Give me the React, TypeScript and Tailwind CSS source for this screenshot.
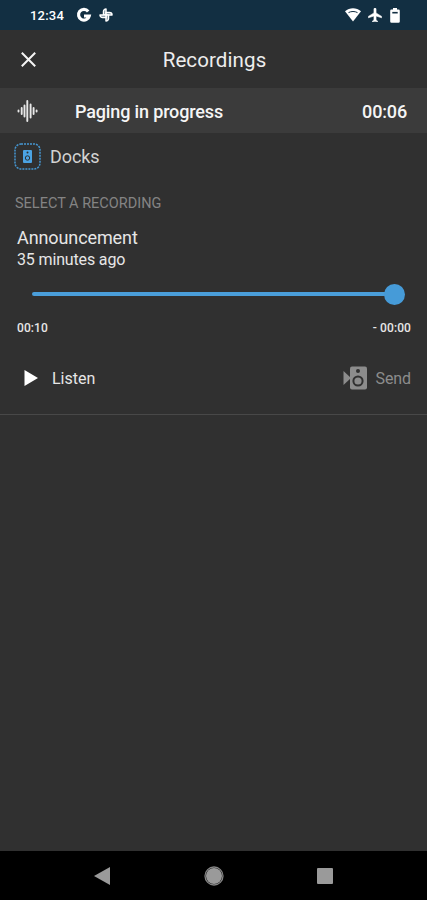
const StatusBar = () => (
  <div className="flex h-[30px] items-center bg-[#122f42] pl-[30px] pr-[27px] text-white">
    <span className="text-[13px] font-medium leading-none tracking-[0.2px]">12:34</span>
    <svg className="ml-3 h-4 w-4" viewBox="0 0 16 16" fill="none" stroke="currentColor" strokeWidth="3.2">
      <path d="M12.200 4.400A5.400 5.400 0 1 0 13.200 9H8" />
    </svg>
    <svg className="ml-[6px] h-4 w-4" viewBox="0 0 16 16" fill="#6f8593" stroke="currentColor" strokeWidth="1.500" strokeLinejoin="round">
      <path d="M8 8H5.500V4.500A2.500 2.500 0 0 1 8 2Z" />
      <path d="M8 8V5.500H11.500A2.500 2.500 0 0 1 14 8Z" />
      <path d="M8 8H10.500V11.500A2.500 2.500 0 0 1 8 14Z" />
      <path d="M8 8V10.500H4.500A2.500 2.500 0 0 1 2 8Z" />
    </svg>
    <div className="ml-auto flex items-center">
      <svg className="h-[14px] w-4" viewBox="0 0 16 14">
        <path d="M0 3.300C4.500-.7 11.500-.7 16 3.300L8 13.500Z" fill="currentColor" />
        <path d="M3.500 4.600C6.200 3.100 9.800 3.100 12.500 4.600" fill="none" stroke="#122f42" strokeWidth="1" />
      </svg>
      <svg className="ml-[7px] h-[14px] w-[14px]" viewBox="2 2 19 20" fill="currentColor" stroke="currentColor" strokeWidth=".8">
        <path d="M21 16v-2l-8-5V3.500c0-.83-.67-1.500-1.500-1.500S10 2.670 10 3.500V9l-8 5v2l8-2.500V19l-2 1.500V22l3.500-1 3.500 1v-1.500L13 19v-5.500l8 2.500z" />
      </svg>
      <svg className="ml-2 h-[15px] w-[10px]" viewBox="0 0 10 15">
        <path d="M3 0h4v1.500h1.500a1.300 1.300 0 0 1 1.300 1.300v10.700a1.300 1.300 0 0 1-1.300 1.300h-7a1.300 1.300 0 0 1-1.300-1.300V2.800a1.300 1.300 0 0 1 1.300-1.300H3z" fill="currentColor" />
        <path d="M2.300 3.900h5.400v1.600H2.300z" fill="#122f42" />
      </svg>
    </div>
  </div>
);

const Header = () => (
  <header className="relative flex h-[58px] items-center justify-center pt-[2px]">
    <button aria-label="Close" className="absolute left-[21px] top-[22px]">
      <svg className="h-[15px] w-[15px]" viewBox="0 0 15 15" stroke="#f5f5f5" strokeWidth="2">
        <path d="M.8.8l13.400 13.400M14.200.8L.8 14.200" />
      </svg>
    </button>
    <h1 className="pl-[2px] text-[20.5px] tracking-[0.1px] text-[#ededed]">Recordings</h1>
  </header>
);

const PagingBar = () => (
  <div className="flex h-[45px] items-center bg-[#3b3b3b] pl-[17px] pr-5 text-[18px] font-medium text-[#f5f5f5]">
    <svg className="h-6 w-[22px]" viewBox="0 0 22 24" stroke="#e8e8e8" strokeWidth="1.900" strokeLinecap="round">
      <path d="M1.500 11.500v1M4.700 9v6M7.500 6.500v11M10.300 2v20M13.600 5.500v13M16.600 9v6M19.600 11.500v1" />
    </svg>
    <span className="ml-9 pt-[2px] tracking-[-0.15px]">Paging in progress</span>
    <span className="ml-auto pt-[2px] tracking-[-0.15px]">00:06</span>
  </div>
);

const Zone = () => (
  <div className="flex h-[47px] items-center pl-[14px]">
    <svg className="h-[27px] w-[27px]" viewBox="0 0 27 27">
      <rect x="1" y="1" width="25" height="25" rx="6" fill="none" stroke="#4596d1" strokeWidth="1.500" strokeDasharray="2 1" />
      <rect x="9" y="7" width="9" height="13" rx="1" fill="#4ba3e3" />
      <circle cx="13.500" cy="9.500" r="1" fill="#303030" />
      <circle cx="13.500" cy="15" r="2.200" fill="none" stroke="#303030" />
    </svg>
    <span className="ml-[9px] text-[18px] tracking-[-0.1px] text-[#d2d2d2]">Docks</span>
  </div>
);

const Recording = () => (
  <section className="h-[190px] border-b border-[#484848] pt-px text-[#e6e6e6]">
    <div className="px-[17px]">
      <h2 className="text-[18px] leading-6 tracking-[-0.1px]">Announcement</h2>
      <p className="text-[16px] leading-5 tracking-[-0.15px]">35 minutes ago</p>
    </div>
    <div className="ml-8 mr-[22px] mt-[13px] flex h-[22px] items-center">
      <div className="h-1 flex-1 rounded-l-full bg-[#4a9eda]" />
      <div className="-ml-[10px] h-[21px] w-[21px] rounded-full bg-[#469bd8]" />
    </div>
    <div className="mt-[14px] flex justify-between px-4 text-[12px] font-medium leading-[18px]">
      <span className="pl-px tracking-[0.1px]">00:10</span>
      <span className="tracking-[0.1px]">- 00:00</span>
    </div>
    <div className="mt-7 flex h-[26px] items-center justify-between pl-6 pr-4 text-[16px]">
      <button className="flex items-center">
        <svg className="h-4 w-[14px]" viewBox="0 0 14 16" fill="#fff">
          <path d="M.5 0L14 8 .5 16z" />
        </svg>
        <span className="ml-[14px] pt-px">Listen</span>
      </button>
      <button className="flex items-center text-[#8c8c8c]">
        <svg className="h-6 w-6" viewBox="0 0 24 24">
          <path d="M.5 5l7.500 7-7.500 7z" fill="#8c8c8c" />
          <rect x="7" y=".5" width="17" height="23" rx="2" fill="#8c8c8c" />
          <circle cx="15" cy="5" r="2" fill="#303030" />
          <circle cx="15" cy="15" r="4.600" fill="none" stroke="#303030" strokeWidth="2" />
        </svg>
        <span className="ml-[9px] pt-px tracking-[-0.1px]">Send</span>
      </button>
    </div>
  </section>
);

const NavigationBar = () => (
  <nav className="mt-auto flex h-[49px] items-center justify-between bg-black pl-[94px] pr-[94px]">
    <svg className="h-[18px] w-4" viewBox="0 0 16 18" fill="#9a9a9a">
      <path d="M16 0v18L0 9z" />
    </svg>
    <svg className="h-5 w-5" viewBox="0 0 20 20">
      <circle cx="10" cy="10" r="8" fill="#9a9a9a" />
      <circle cx="10" cy="10" r="9" fill="none" stroke="#858585" strokeWidth="1.300" />
    </svg>
    <div className="h-4 w-4 rounded-[1px] bg-[#9a9a9a]" />
  </nav>
);

const App = () => (
  <div className="flex h-[900px] w-[427px] flex-col overflow-hidden bg-[#303030] font-['Roboto',sans-serif]">
    <StatusBar />
    <Header />
    <PagingBar />
    <Zone />
    <p className="flex h-[45px] items-center pl-[15px] pt-[2px] text-[14.5px] text-[#848484]">SELECT A RECORDING</p>
    <Recording />
    <NavigationBar />
  </div>
);

export default App;
